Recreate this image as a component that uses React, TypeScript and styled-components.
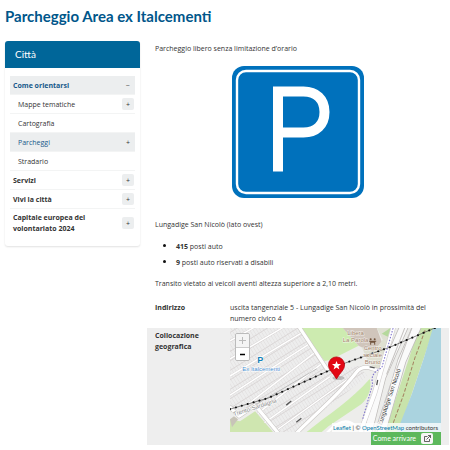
import React from "react";
import styled, { createGlobalStyle, css } from "styled-components";

const GlobalStyle = createGlobalStyle`
  *, *::before, *::after { box-sizing: border-box; }
  body {
    margin: 0;
    background: #fff;
    color: #333;
    font-family: "Open Sans", "Noto Sans", sans-serif;
    font-size: 7px;
    line-height: 11px;
  }
  button { font: inherit; color: inherit; padding: 0; border: 0; cursor: pointer; }
  a { text-decoration: none; }
`;

const Page = styled.div`
  padding: 6px 1px 5px 5px;
`;

const Title = styled.h1`
  margin: 0 0 15px;
  font-family: Lato, sans-serif;
  font-size: 15px;
  line-height: 20px;
  font-weight: 700;
  color: #00568a;
`;

const Columns = styled.div`
  display: grid;
  grid-template-columns: minmax(0, 135fr) minmax(0, 302fr);
  column-gap: 7px;
  align-items: start;
`;

const Card = styled.nav`
  border-radius: 3px;
  overflow: hidden;
  box-shadow: 0 1px 2px rgba(0, 0, 0, 0.12);
`;

const CardTitle = styled.h2`
  margin: 0;
  padding: 4px 10px;
  background: #006699;
  color: #fff;
  font-family: Lato, sans-serif;
  font-size: 10px;
  line-height: 19px;
  font-weight: 400;
`;

const Menu = styled.ul`
  margin: 0;
  padding: 8px 5px 9px;
  list-style: none;
`;

const MenuRow = styled.li<{ $sub?: boolean; $shade?: boolean; $tall?: boolean }>`
  display: flex;
  align-items: center;
  justify-content: space-between;
  min-height: ${(p) => (p.$tall ? 28 : 19)}px;
  padding: 0 1px 0 ${(p) => (p.$sub ? 8 : 3)}px;
  border-bottom: 1px solid #f3f4f4;
  background: ${(p) => (p.$shade ? "#eceeef" : "transparent")};
  &:last-child { border-bottom: 0; }
`;

const MenuLink = styled.a<{ $strong?: boolean; $active?: boolean }>`
  max-width: 80px;
  color: ${(p) => (p.$active ? "#17598a" : "#333")};
  font-weight: ${(p) => (p.$strong ? 700 : 400)};
`;

const Toggle = styled.button<{ $plain?: boolean }>`
  width: 12px;
  height: 12px;
  border-radius: 2px;
  line-height: 11px;
  background: ${(p) => (p.$plain ? "transparent" : "#eceeef")};
`;

const Content = styled.main`
  min-width: 0;
`;

const Body = styled.div`
  padding: 2px 8px 0;
`;

const Text = styled.p`
  margin: 0 0 10px;
`;

const Figure = styled.figure`
  display: flex;
  justify-content: center;
  margin: 0 0 17px;
  svg { display: block; width: 134px; height: 138px; }
`;

const Spots = styled.ul`
  margin: 0 0 10px;
  padding-left: 21px;
  li { margin-bottom: 4px; }
  li::marker { color: #111; font-size: 8px; }
`;

const Details = styled.dl`
  margin: 0;
`;

const Detail = styled.div<{ $shade?: boolean }>`
  display: grid;
  grid-template-columns: 68px minmax(0, 1fr);
  column-gap: 7px;
  padding: 0 8px;
  ${(p) =>
    p.$shade
      ? css`background: #eeeeee;`
      : css`padding-top: 3px; padding-bottom: 4px;`}
`;

const Term = styled.dt<{ $inset?: boolean }>`
  font-weight: 700;
  padding-top: ${(p) => (p.$inset ? 2 : 0)}px;
`;

const Value = styled.dd`
  margin: 0;
`;

const MapFrame = styled.div`
  position: relative;
  height: 104px;
  > svg { display: block; width: 100%; height: 100%; }
`;

const ZoomBox = styled.div`
  position: absolute;
  top: 5px;
  left: 5px;
  display: grid;
  width: 15px;
  border: 1px solid #bbb;
  border-radius: 2px;
  overflow: hidden;
`;

const ZoomButton = styled.button<{ $muted?: boolean }>`
  display: grid;
  place-items: center;
  height: 13px;
  background: ${(p) => (p.$muted ? "#f4f4f4" : "#fff")};
  color: ${(p) => (p.$muted ? "#bbb" : "#000")};
  & + & { border-top: 1px solid #ccc; }
  svg { width: 7px; height: 7px; }
`;

const Attribution = styled.div`
  position: absolute;
  right: 0;
  bottom: 0;
  padding: 0 3px 0 1px;
  background: rgba(255, 255, 255, 0.75);
  font-family: Lato, sans-serif;
  font-size: 6px;
  line-height: 9px;
  color: #333;
  a { color: #0078a8; }
`;

const Actions = styled.div`
  display: flex;
  justify-content: flex-end;
`;

const Directions = styled.a`
  display: flex;
  align-items: center;
  gap: 5px;
  height: 13px;
  padding: 0 8px 0 2px;
  background: #5cb85c;
  color: #fff;
  font-family: Lato, sans-serif;
`;

const IconBox = styled.span`
  display: grid;
  place-items: center;
  width: 12px;
  height: 11px;
  border-radius: 2px;
  background: #f5f5f5;
  svg { width: 7px; height: 7px; }
`;

type Entry = {
  label: string;
  sub?: boolean;
  strong?: boolean;
  active?: boolean;
  toggle?: "+" | "−";
  tall?: boolean;
};

const entries: Entry[] = [
  { label: "Come orientarsi", strong: true, active: true, toggle: "−" },
  { label: "Mappe tematiche", sub: true, toggle: "+" },
  { label: "Cartografia", sub: true },
  { label: "Parcheggi", sub: true, active: true, toggle: "+" },
  { label: "Stradario", sub: true },
  { label: "Servizi", strong: true, toggle: "+" },
  { label: "Vivi la città", strong: true, toggle: "+" },
  { label: "Capitale europea del volontariato 2024", strong: true, toggle: "+", tall: true },
];

function ParkingSign() {
  return (
    <svg viewBox="0 0 134 138" role="img" aria-label="Parcheggio">
      <rect x="1" y="2" width="132" height="132" rx="12" fill="#0071bc" />
      <rect x="6" y="7" width="122" height="122" rx="9" fill="none" stroke="#fff" strokeWidth="2.4" />
      <path d="M47 107.500V27.500H72.500C85 27.500 93.500 35 93.500 48S85 68.500 72.500 68.500H47" fill="none" stroke="#fff" strokeWidth="10" />
    </svg>
  );
}

const rail = "M0 81 38 70 91 46 115 35 160 19 202 1 212 -3";

function StreetMap() {
  return (
    <svg viewBox="0 0 210 104" preserveAspectRatio="xMidYMid slice" role="img" aria-label="Mappa">
      <defs>
        <pattern id="stalls" width="3" height="8" patternUnits="userSpaceOnUse" patternTransform="rotate(-32)">
          <rect width="3" height="8" fill="#ededed" />
          <path d="M0 0V8M0 4H3" stroke="#d9d4d4" strokeWidth="0.7" fill="none" />
        </pattern>
      </defs>
      <rect width="210" height="104" fill="#ededeb" />
      <path d="M0 0H68L96 42 128 38 137 48 66 104H45L24 78 8 88 0 80Z" fill="url(#stalls)" />
      <path d="M0 104V91L10 93 25 83 43 104Z" fill="#cfe6b0" />
      <path d="M0 91 4 88 8 91 2 99Z" fill="#c8c4b8" />
      <path d="M70 0H112L128 18 100 32 94 33Z" fill="#cdebb0" />
      <path d="M112 0H146L151 14 142 25 128 18Z" fill="#d0c5bb" />
      <path d="M146 0H161L150 44 138 35 131 19 143 24 152 12Z" fill="#dfe0d2" />
      <path d="M151 6 160 0 157 9Z" fill="#b5d99c" />
      <path d="M76 104C98 86 121 72 139 51 142 60 137 72 128 78L98 98 91 104Z" fill="#cdebb0" />
      <path d="M188 0H203L168 104H154Z" fill="#c8e3ab" />
      <path d="M202 0H210V104H166L181 66 193 30Z" fill="#aad3df" />
      <g fill="none" strokeLinecap="round" strokeLinejoin="round">
        <path d="M0 13 27 -2M0 31 54 -1M0 48 73 4M0 67 79 16M18 76 84 25M28 85 91 36M35 94 99 49M45 103 116 52" stroke="#d5d1d1" strokeWidth="2.200" />
        <path d="M0 13 27 -2M0 31 54 -1M0 48 73 4M0 67 79 16M18 76 84 25M28 85 91 36M35 94 99 49M45 103 116 52" stroke="#fff" strokeWidth="1.500" />
        <path d="M68 -2 97 42M0 79 9 88 25 77 49 106M66 105C91 80 110 65 126 44Q132 37 142 41L150 43" stroke="#cbc8c6" strokeWidth="4.400" />
        <path d="M68 -2 97 42M0 79 9 88 25 77 49 106M66 105C91 80 110 65 126 44Q132 37 142 41L150 43" stroke="#fff" strokeWidth="3.200" />
        <path d="M174 -3 151 49 137 105M187 -3 171 33 150 106" stroke="#bfbcba" strokeWidth="9" />
        <path d="M174 -3 151 49 137 105M187 -3 171 33 150 106" stroke="#fafafa" strokeWidth="7.500" />
        <path d="M163 -2 151 40 144 65 129 106" stroke="#cecaca" strokeWidth="5" />
        <path d="M163 -2 151 40 144 65 129 106" stroke="#fff" strokeWidth="4" />
        <path d="M97 104Q113 87 124 97L133 105" stroke="#fff" strokeWidth="2.500" />
        <path d="M163 -2 151 40Q139 45 142 56L132 91" stroke="#8479ce" strokeWidth="1.200" strokeDasharray="0.500 2.500" />
        <path d="M174 0 156 46M160 56 144 104M181 0 166 41" stroke="#c6c3c1" strokeWidth="1" />
        <path d="M194 3 184 30 173 66 162 96" stroke="#a58261" strokeWidth="1" strokeDasharray="3 2.500" />
        <path d="M8 87 86 41" stroke="#aaa" strokeWidth="0.700" />
        <path d={rail} stroke="#555" strokeWidth="0.700" />
        <path d={rail} stroke="#111" strokeWidth="2" strokeDasharray="0.100 6" />
      </g>
      <path d="M56 77 61 73M66 94 71 90M139 39 144 40M147 52 146 57" stroke="#555" strokeWidth="1.300" />
      <g fontFamily="Liberation Sans, sans-serif" fontSize="6" stroke="#fff" strokeWidth="1" paintOrder="stroke">
        <text x="27" y="35" fontSize="9" fontWeight="700" fill="#1681b8">P</text>
        <text x="31" y="43" textAnchor="middle" fill="#4a8fd0">Ex Italcementi</text>
        <g fill="#a18368" textAnchor="middle" strokeOpacity="0.700">
          <text x="125" y="7">Libera</text>
          <text x="125" y="14">La Parola</text>
          <text x="142" y="22">Centro</text>
          <text x="142" y="29">sociale</text>
          <text x="142" y="36">Bruno</text>
        </g>
        <text x="4" y="88" fill="#888" transform="rotate(-18 4 88)">Trento-Sardagna</text>
        <text x="151" y="97" fill="#333" transform="rotate(-71 151 97)">Lungadige San Nicolò</text>
      </g>
      <g fill="#70523b">
        <circle cx="140" cy="11.500" r="1" />
        <circle cx="144" cy="11.500" r="1" />
        <path d="M138.500 13H145.500V14H144.500V17H143.500V15H140.500V17H139.500V14H138.500Z" />
      </g>
      <ellipse cx="108" cy="50" rx="6" ry="2" fill="#777" opacity="0.400" />
      <path d="M106 51C102 44 98 42 98 37A8 8 0 0 1 114 37C114 42 110 44 106 51Z" fill="#e30613" stroke="#b50009" strokeWidth="0.700" />
      <path d="M106 33 107.200 36.200H110.500L107.900 38.200 108.900 41.500 106 39.600 103.100 41.500 104.100 38.200 101.500 36.200H104.800Z" fill="#fff" />
    </svg>
  );
}

function ExternalIcon() {
  return (
    <svg viewBox="0 0 14 14" fill="none" stroke="#333" strokeWidth="1.500" aria-hidden="true">
      <path d="M7 3H1V13H11V8M5 9 13 1M8 1H13V6" />
    </svg>
  );
}

export default function App() {
  return (
    <>
      <GlobalStyle />
      <Page>
        <Title>Parcheggio Area ex Italcementi</Title>
        <Columns>
          <Card>
            <CardTitle>Città</CardTitle>
            <Menu>
              {entries.map((e) => (
                <MenuRow key={e.label} $sub={e.sub} $shade={e.active} $tall={e.tall}>
                  <MenuLink href="#" $strong={e.strong} $active={e.active}>{e.label}</MenuLink>
                  {e.toggle && (
                    <Toggle type="button" $plain={e.active} aria-label={e.label}>{e.toggle}</Toggle>
                  )}
                </MenuRow>
              ))}
            </Menu>
          </Card>
          <Content>
            <Body>
              <Text>Parcheggio libero senza limitazione d’orario</Text>
              <Figure><ParkingSign /></Figure>
              <Text>Lungadige San Nicolò (lato ovest)</Text>
              <Spots>
                <li><strong>415</strong> posti auto</li>
                <li><strong>9</strong> posti auto riservati a disabili</li>
              </Spots>
              <Text>Transito vietato ai veicoli aventi altezza superiore a 2,10 metri.</Text>
            </Body>
            <Details>
              <Detail>
                <Term>Indirizzo</Term>
                <Value>uscita tangenziale 5 - Lungadige San Nicolò in prossimità del numero civico 4</Value>
              </Detail>
              <Detail $shade>
                <Term $inset>Collocazione geografica</Term>
                <Value>
                  <MapFrame>
                    <StreetMap />
                    <ZoomBox>
                      <ZoomButton type="button" $muted aria-label="Ingrandisci">
                        <svg viewBox="0 0 7 7"><path d="M0 3.500H7M3.500 0V7" stroke="currentColor" /></svg>
                      </ZoomButton>
                      <ZoomButton type="button" aria-label="Riduci">
                        <svg viewBox="0 0 7 7"><path d="M1 3.500H6" stroke="currentColor" strokeWidth="1.400" /></svg>
                      </ZoomButton>
                    </ZoomBox>
                    <Attribution>
                      <a href="#">Leaflet</a> | © <a href="#">OpenStreetMap</a> contributors
                    </Attribution>
                  </MapFrame>
                  <Actions>
                    <Directions href="#">
                      Come arrivare
                      <IconBox><ExternalIcon /></IconBox>
                    </Directions>
                  </Actions>
                </Value>
              </Detail>
            </Details>
          </Content>
        </Columns>
      </Page>
    </>
  );
}
